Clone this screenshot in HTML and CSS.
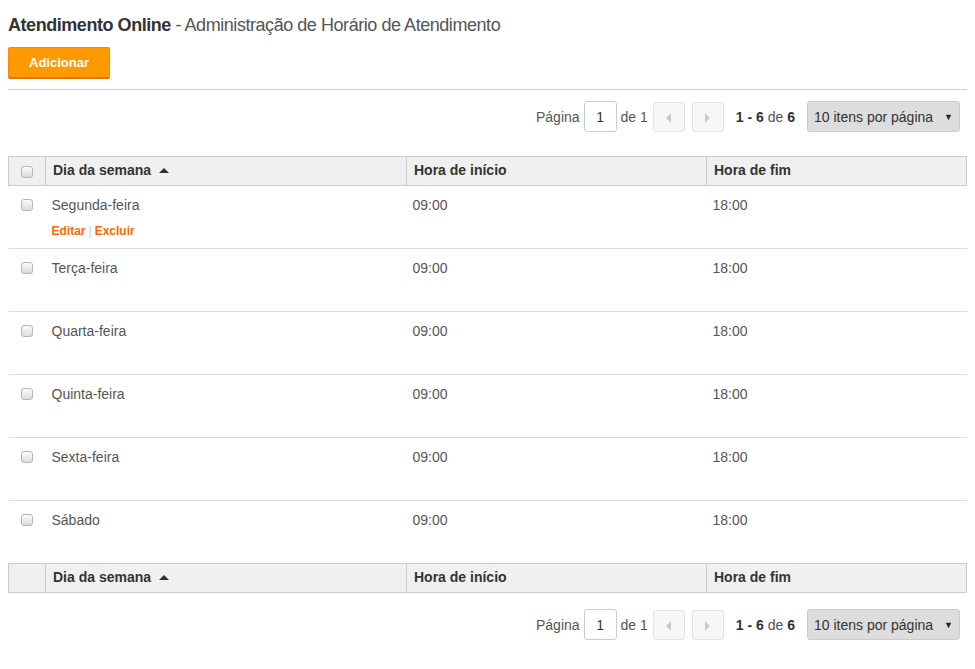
FILE: index.html
```html
<!DOCTYPE html>
<html lang="pt-BR">
<head>
  <meta charset="UTF-8">
  <meta name="viewport" content="width=device-width, initial-scale=1.0">
  <title>Atendimento Online</title>
  <link rel="stylesheet" href="styles.css">
</head>
<body>
  <h1 class="page-title"><strong>Atendimento Online</strong> - Administração de Horário de Atendimento</h1>

  <div class="toolbar">
    <button class="btn-add">Adicionar</button>
  </div>

  <div class="pager">
    <span>Página</span>
    <input type="text" class="page-input" value="1">
    <span>de 1</span>
    <button class="page-btn prev"><span class="tri-left"></span></button>
    <button class="page-btn next"><span class="tri-right"></span></button>
    <span class="page-info"><b>1 - 6</b> de <b>6</b></span>
    <div class="page-size">10 itens por página <span class="caret">&#9660;</span></div>
  </div>

  <table class="grid">
    <thead>
      <tr>
        <th class="col-check"><span class="check"></span></th>
        <th class="col-day">Dia da semana <span class="sort-up"></span></th>
        <th class="col-start">Hora de início</th>
        <th class="col-end">Hora de fim</th>
      </tr>
    </thead>
    <tbody>
      <tr>
        <td class="col-check"><span class="check"></span></td>
        <td>
          <div class="cell-text">Segunda-feira</div>
          <div class="row-actions"><a href="#">Editar</a><span class="sep">|</span><a href="#">Excluir</a></div>
        </td>
        <td><div class="cell-text">09:00</div></td>
        <td><div class="cell-text">18:00</div></td>
      </tr>
      <tr>
        <td class="col-check"><span class="check"></span></td>
        <td><div class="cell-text">Terça-feira</div></td>
        <td><div class="cell-text">09:00</div></td>
        <td><div class="cell-text">18:00</div></td>
      </tr>
      <tr>
        <td class="col-check"><span class="check"></span></td>
        <td><div class="cell-text">Quarta-feira</div></td>
        <td><div class="cell-text">09:00</div></td>
        <td><div class="cell-text">18:00</div></td>
      </tr>
      <tr>
        <td class="col-check"><span class="check"></span></td>
        <td><div class="cell-text">Quinta-feira</div></td>
        <td><div class="cell-text">09:00</div></td>
        <td><div class="cell-text">18:00</div></td>
      </tr>
      <tr>
        <td class="col-check"><span class="check"></span></td>
        <td><div class="cell-text">Sexta-feira</div></td>
        <td><div class="cell-text">09:00</div></td>
        <td><div class="cell-text">18:00</div></td>
      </tr>
      <tr class="last">
        <td class="col-check"><span class="check"></span></td>
        <td><div class="cell-text">Sábado</div></td>
        <td><div class="cell-text">09:00</div></td>
        <td><div class="cell-text">18:00</div></td>
      </tr>
    </tbody>
    <tfoot>
      <tr>
        <th class="col-check"></th>
        <th class="col-day">Dia da semana <span class="sort-up"></span></th>
        <th class="col-start">Hora de início</th>
        <th class="col-end">Hora de fim</th>
      </tr>
    </tfoot>
  </table>

  <div class="pager bottom">
    <span>Página</span>
    <input type="text" class="page-input" value="1">
    <span>de 1</span>
    <button class="page-btn prev"><span class="tri-left"></span></button>
    <button class="page-btn next"><span class="tri-right"></span></button>
    <span class="page-info"><b>1 - 6</b> de <b>6</b></span>
    <div class="page-size">10 itens por página <span class="caret">&#9660;</span></div>
  </div>
</body>
</html>
```

FILE: styles.css
```css
body {
  font-family: "Liberation Sans", Arial, sans-serif;
  font-size: 14px;
  color: #555;
  margin: 8px;
}

.page-title {
  font-size: 18px;
  font-weight: normal;
  line-height: 22px;
  color: #555;
  letter-spacing: -0.45px;
  margin: 6px 0 11px;
}
.page-title strong {
  color: #333;
}

.toolbar {
  padding-bottom: 10px;
  border-bottom: 1px solid #ccc;
}

.btn-add {
  width: 102px;
  height: 32px;
  background-color: #f90;
  color: #fff;
  font-family: inherit;
  font-size: 13px;
  font-weight: bold;
  border: 1px solid #f80;
  border-bottom: 2px solid #e67300;
  border-radius: 2px;
  cursor: pointer;
  display: block;
}

.pager {
  display: flex;
  justify-content: flex-end;
  align-items: center;
  height: 31px;
  margin: 11px 7px 24px 0;
  color: #555;
}
.pager.bottom {
  margin-top: 16px;
  margin-bottom: 0;
}

.page-input {
  width: 33px;
  height: 31px;
  box-sizing: border-box;
  border: 1px solid #ccc;
  border-radius: 3px;
  text-align: center;
  font-family: inherit;
  font-size: 14px;
  color: #333;
  margin: 0 4px;
  padding: 0;
}

.page-btn {
  width: 32px;
  height: 30px;
  box-sizing: border-box;
  border: 1px solid #e3e3e3;
  background-color: #f7f7f7;
  border-radius: 3px;
  margin-left: 5px;
  padding: 0;
  display: flex;
  align-items: center;
  justify-content: center;
}
.page-btn.next {
  margin-left: 7px;
}
.tri-left,
.tri-right {
  width: 0;
  height: 0;
  border-top: 5px solid transparent;
  border-bottom: 5px solid transparent;
  margin-top: 2px;
}
.tri-left {
  border-right: 5px solid #ccc;
}
.tri-right {
  border-left: 5px solid #ccc;
}

.page-info {
  margin: 0 12px;
  color: #555;
}
.page-info b {
  color: #333;
}

.page-size {
  width: 153px;
  height: 31px;
  box-sizing: border-box;
  background-color: #ddd;
  border: 1px solid #ccc;
  border-radius: 3px;
  color: #333;
  padding: 0 6px;
  display: flex;
  align-items: center;
  justify-content: space-between;
}
.caret {
  font-size: 9px;
  color: #222;
}

.grid {
  width: 100%;
  border-collapse: collapse;
}

.grid th {
  background-color: #f0f0f0;
  border: 1px solid #ccc;
  text-align: left;
  font-weight: bold;
  color: #333;
  padding: 5px 7px 7px;
  line-height: 16px;
  height: 16px;
}

.grid td {
  vertical-align: top;
  padding: 10px 7px 10px 6px;
  height: 42px;
  border-bottom: 1px solid #ddd;
  line-height: 18px;
}
.grid tr.last td {
  border-bottom: none;
}

.grid .col-check {
  width: 22px;
  text-align: center;
  padding-left: 7px;
  padding-right: 7px;
}
.grid .col-day {
  width: 346px;
}
.grid .col-start {
  width: 285px;
}

.check {
  display: inline-block;
  width: 10px;
  height: 10px;
  border: 1px solid #b5b5b5;
  border-radius: 3px;
  background: linear-gradient(#fbfbfb, #dcdcdc);
  vertical-align: middle;
  margin-top: -3px;
}
.grid th .check {
  margin-top: 2px;
}

.sort-up {
  display: inline-block;
  width: 0;
  height: 0;
  border-left: 5px solid transparent;
  border-right: 5px solid transparent;
  border-bottom: 5px solid #333;
  margin-left: 4px;
  vertical-align: middle;
  margin-top: -2px;
}

.row-actions {
  margin-top: 10px;
  font-size: 12px;
  line-height: 14px;
  font-weight: bold;
}
.row-actions a {
  color: #f60;
  text-decoration: none;
}
.row-actions .sep {
  color: #ccc;
  font-weight: normal;
  margin: 0 3px;
}
```
